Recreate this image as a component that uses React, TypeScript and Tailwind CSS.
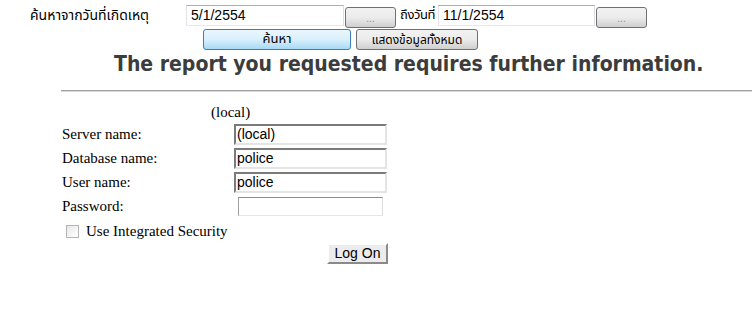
const thai = "font-['Tahoma','Noto_Sans_Thai','Noto_Sans',sans-serif]";
const arial = "font-['Liberation_Sans',Arial,sans-serif]";
const serif = "font-['Liberation_Serif','Times_New_Roman',serif]";

function DateBox({ value, width }: { value: string; width: string }) {
  return (
    <div
      className={`${width} h-[21px] shrink-0 border border-[#abadb3] border-r-[#dbdfe6] border-b-[#e3e9ef] border-l-[#e2e3ea] bg-white flex items-center pl-[4px] text-[14px] text-black ${arial}`}
    >
      {value}
    </div>
  );
}

function DotsButton() {
  return (
    <button
      className={`w-[51px] h-[21px] shrink-0 rounded-[3px] border border-[#707070] bg-gradient-to-b from-[#f2f2f2] via-[#ebebeb] to-[#cfcfcf] text-[10px] text-[#8a8a8a] leading-none pt-[4px] ${arial}`}
    >
      ...
    </button>
  );
}

function SunkenInput({ value }: { value: string }) {
  return (
    <div
      className={`w-[153px] h-[21px] border-2 border-t-[#7a7a7a] border-l-[#7a7a7a] border-r-[#e4e4e4] border-b-[#e4e4e4] bg-white flex items-center pl-[1px] text-[14px] text-black ${arial}`}
    >
      {value}
    </div>
  );
}

export default function App() {
  return (
    <div className="w-[752px] h-[316px] overflow-hidden bg-white text-black">
      {/* date search bar */}
      <div className="flex items-center h-[26px] pt-[5px] pl-[30px] whitespace-nowrap">
        <span className={`w-[156px] shrink-0 text-[14px] leading-[21px] text-black ${thai}`}>ค้นหาจากวันที่เกิดเหตุ</span>
        <DateBox value="5/1/2554" width="w-[158px]" />
        <div className="ml-[1px] mt-[1px]">
          <DotsButton />
        </div>
        <span className={`ml-[4px] w-[38px] shrink-0 text-[13px] tracking-[-0.4px] leading-[21px] ${thai}`}>ถึงวันที่</span>
        <DateBox value="11/1/2554" width="w-[157px]" />
        <div className="ml-[1px] mt-[1px]">
          <DotsButton />
        </div>
      </div>
      <div className="flex gap-[5px] h-[21px] pl-[203px] mt-[3px] whitespace-nowrap">
        <button
          className={`w-[148px] h-[21px] rounded-[3px] border border-[#3c7fb1] bg-gradient-to-b from-[#eaf6fd] via-[#d9f0fc] to-[#a7d9f5] text-[13px] leading-none ${thai}`}
        >
          ค้นหา
        </button>
        <button
          className={`w-[122px] h-[21px] rounded-[3px] border border-[#707070] bg-gradient-to-b from-[#f2f2f2] via-[#ebebeb] to-[#cfcfcf] text-[12px] leading-none ${thai}`}
        >
          แสดงข้อมูลทั้งหมด
        </button>
      </div>

      {/* report prompt */}
      <h1
        className="pl-[114px] mt-[1px] h-[26px] whitespace-nowrap text-[21px] leading-[26px] font-bold text-[#3c3c3c] font-['DejaVu_Sans_Condensed','DejaVu_Sans',sans-serif]"
      >
        The report you requested requires further information.
      </h1>
      <div className="ml-[61px] mt-[13px] h-[2px] bg-[#a3a3a3] border-b border-[#d8d8d8]" />

      <div className={`ml-[62px] text-[15px] ${serif}`}>
        <div className="pl-[149px] mt-[12px] leading-[17px]">(local)</div>
        <div className="mt-[3px] flex flex-col gap-[3px]">
          {[
            ["Server name:", "(local)"],
            ["Database name:", "police"],
            ["User name:", "police"],
          ].map(([label, value]) => (
            <div key={label} className="flex items-center h-[21px]">
              <span className="w-[172px]">{label}</span>
              <SunkenInput value={value} />
            </div>
          ))}
          <div className="flex items-center h-[21px]">
            <span className="w-[176px]">Password:</span>
            <div className="w-[145px] h-[19px] border border-[#a0a0a0] border-t-[#8c8c8c] border-r-[#dcdcdc] border-b-[#e6e6e6] bg-white" />
          </div>
        </div>
        <div className="flex items-center mt-[6px] pl-[4px]">
          <span className="w-[13px] h-[13px] border border-[#b5b5b5] bg-gradient-to-br from-[#e8e8e8] to-white" />
          <span className="ml-[7px] leading-[17px]">Use Integrated Security</span>
        </div>
        <div className="pl-[265px] mt-[2px]">
          <button
            className={`w-[61px] h-[21px] bg-[#ececec] border-2 border-t-white border-l-white border-r-[#8a8a8a] border-b-[#8a8a8a] text-[14px] leading-none ${arial}`}
          >
            Log On
          </button>
        </div>
      </div>
    </div>
  );
}
